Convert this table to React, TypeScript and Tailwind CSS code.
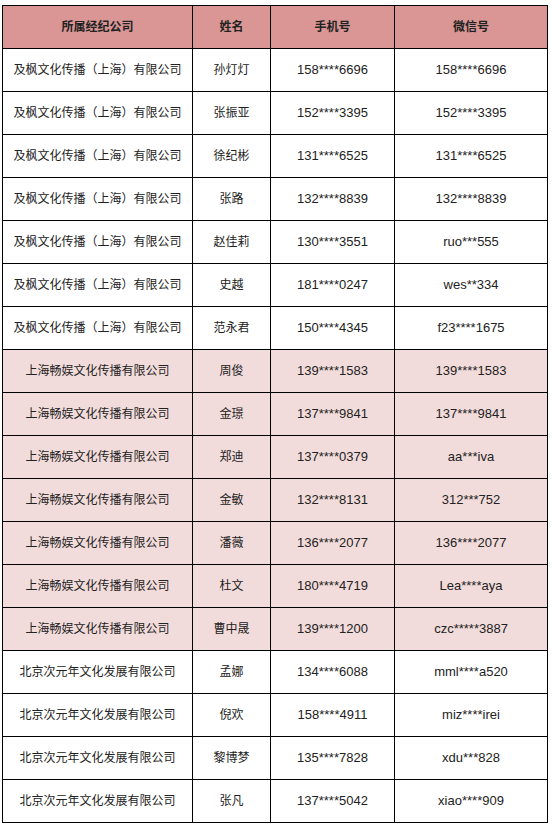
import * as React from 'react';

const rows: [string, string, string, string][] = [
  ['及枫文化传播（上海）有限公司', '孙灯灯', '158****6696', '158****6696'],
  ['及枫文化传播（上海）有限公司', '张振亚', '152****3395', '152****3395'],
  ['及枫文化传播（上海）有限公司', '徐纪彬', '131****6525', '131****6525'],
  ['及枫文化传播（上海）有限公司', '张路', '132****8839', '132****8839'],
  ['及枫文化传播（上海）有限公司', '赵佳莉', '130****3551', 'ruo***555'],
  ['及枫文化传播（上海）有限公司', '史越', '181****0247', 'wes**334'],
  ['及枫文化传播（上海）有限公司', '范永君', '150****4345', 'f23****1675'],
  ['上海畅娱文化传播有限公司', '周俊', '139****1583', '139****1583'],
  ['上海畅娱文化传播有限公司', '金璟', '137****9841', '137****9841'],
  ['上海畅娱文化传播有限公司', '郑迪', '137****0379', 'aa***iva'],
  ['上海畅娱文化传播有限公司', '金敏', '132****8131', '312***752'],
  ['上海畅娱文化传播有限公司', '潘薇', '136****2077', '136****2077'],
  ['上海畅娱文化传播有限公司', '杜文', '180****4719', 'Lea****aya'],
  ['上海畅娱文化传播有限公司', '曹中晟', '139****1200', 'czc*****3887'],
  ['北京次元年文化发展有限公司', '孟娜', '134****6088', 'mml****a520'],
  ['北京次元年文化发展有限公司', '倪欢', '158****4911', 'miz****irei'],
  ['北京次元年文化发展有限公司', '黎博梦', '135****7828', 'xdu***828'],
  ['北京次元年文化发展有限公司', '张凡', '137****5042', 'xiao****909'],
];

const cell = 'border border-black text-center align-middle p-0';

export default function App() {
  return (
    <div className="min-h-[825px] w-[552px] bg-white pl-[2px] pt-[5px] font-['Liberation_Sans','Noto_Sans_CJK_SC',sans-serif] text-[12px] text-[#222]">
      <table className="w-[545px] table-fixed border-collapse">
        <colgroup>
          <col className="w-[190px]" />
          <col className="w-[78px]" />
          <col className="w-[124px]" />
          <col className="w-[153px]" />
        </colgroup>
        <thead>
          <tr className="h-[43px] bg-[#d99694] font-bold">
            <th className={cell}>所属经纪公司</th>
            <th className={cell}>姓名</th>
            <th className={cell}>手机号</th>
            <th className={cell}>微信号</th>
          </tr>
        </thead>
        <tbody>
          {rows.map((r, i) => (
            <tr key={i} className={i >= 7 && i <= 13 ? 'h-[43px] bg-[#f2dcdb]' : 'h-[43px] bg-white'}>
              <td className={cell}>{r[0]}</td>
              <td className={cell}>{r[1]}</td>
              <td className={`${cell} text-[13px]`}>{r[2]}</td>
              <td className={`${cell} text-[13px]`}>{r[3]}</td>
            </tr>
          ))}
        </tbody>
      </table>
    </div>
  );
}
